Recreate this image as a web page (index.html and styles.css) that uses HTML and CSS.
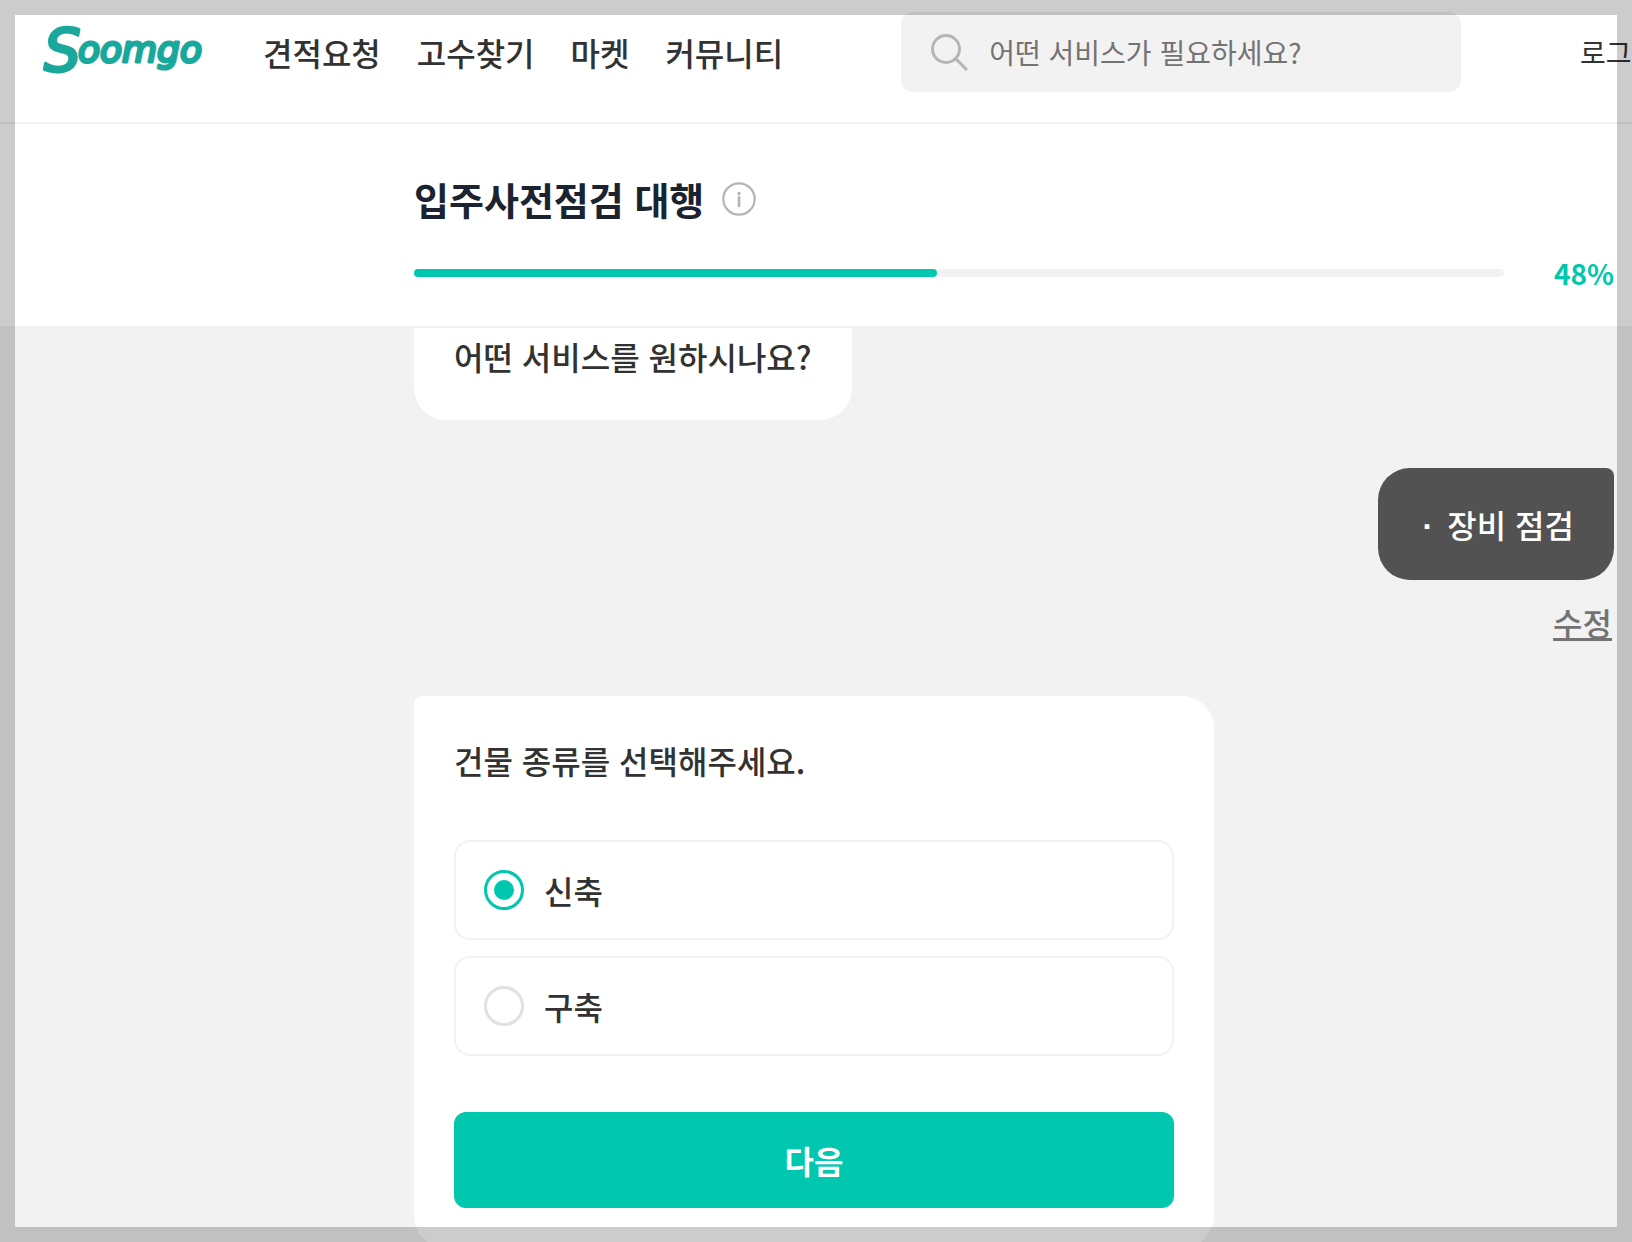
FILE: index.html
```html
<!DOCTYPE html>
<html lang="ko">
<head>
    <meta charset="UTF-8">
    <meta name="viewport" content="width=device-width, initial-scale=1.0">
    <title>입주사전점검 대행 - Soomgo</title>
    <link rel="stylesheet" href="styles.css">
</head>
<body>
    <!-- Top navigation -->
    <header class="header">
        <a href="#" class="logo">
            <svg width="164" height="64" viewBox="0 0 164 64">
                <text class="logo-initial" x="4" y="51">S</text>
                <text class="logo-rest" x="38" y="42">oomgo</text>
            </svg>
        </a>
        <nav class="nav">
            <a href="#">견적요청</a>
            <a href="#">고수찾기</a>
            <a href="#">마켓</a>
            <a href="#">커뮤니티</a>
        </nav>
        <label class="search">
            <svg class="search-icon" width="38" height="38" viewBox="0 0 38 38" fill="none" stroke="#b5b5b5" stroke-width="3">
                <circle cx="15" cy="16" r="13.5"/>
                <path d="M24.5 25.5L36 37"/>
            </svg>
            <input type="text" placeholder="어떤 서비스가 필요하세요?" aria-label="서비스 검색">
        </label>
        <a href="#" class="login">로그인</a>
    </header>

    <!-- Request title and progress -->
    <section class="progress-section">
        <div class="title-row">
            <h1>입주사전점검 대행</h1>
            <button class="info-btn" type="button" aria-label="서비스 안내">
                <svg width="34" height="34" viewBox="0 0 34 34" fill="none" stroke="#b5b5b5">
                    <circle cx="17" cy="17" r="15.7" stroke-width="2.2"/>
                    <path d="M17 15V24" stroke-width="2.6" stroke-linecap="round"/>
                    <circle cx="17" cy="11.5" r="1.7" fill="#b5b5b5" stroke="none"/>
                </svg>
            </button>
        </div>
        <div class="progress-row">
            <div class="progress-bar">
                <div class="progress-fill" style="width: 48%"></div>
            </div>
            <span class="progress-value">48%</span>
        </div>
    </section>

    <!-- Chat -->
    <main class="chat">
        <div class="question">어떤 서비스를 원하시나요?</div>

        <div class="answer"><span class="dot">·</span>장비 점검</div>
        <a href="#" class="edit">수정</a>

        <form class="card">
            <h2>건물 종류를 선택해주세요.</h2>
            <div class="options">
                <label class="option">
                    <input type="radio" name="building" checked>
                    <span>신축</span>
                </label>
                <label class="option">
                    <input type="radio" name="building">
                    <span>구축</span>
                </label>
            </div>
            <button class="next-btn" type="button">다음</button>
        </form>
    </main>

    <div class="frame"></div>
</body>
</html>
```
FILE: styles.css
```css
* {
    box-sizing: border-box;
}
body {
    margin: 0;
    height: 100vh;
    overflow: hidden;
    background-color: #f2f2f2;
    color: #323232;
    font-family: "Noto Sans CJK KR", "Noto Sans", sans-serif;
    font-size: 32px;
    font-weight: 500;
    line-height: 48px;
}
a {
    color: inherit;
    text-decoration: none;
}
.header {
    display: flex;
    align-items: center;
    padding: 12px 0 30px 40px;
    background-color: #fff;
    border-bottom: 2px solid #f2f2f2;
    white-space: nowrap;
}
.logo {
    flex: none;
    margin-right: 59px;
}
.logo svg {
    display: block;
    overflow: visible;
}
.logo text {
    fill: #1aa79c;
    stroke: #1aa79c;
    stroke-width: 3px;
    stroke-linejoin: round;
    font-family: "DejaVu Sans", sans-serif;
    font-style: italic;
    font-weight: 400;
}
.logo .logo-initial {
    font-size: 58px;
}
.logo .logo-rest {
    font-size: 36px;
}
.nav {
    display: flex;
    gap: 36px;
}
.search {
    display: flex;
    flex: 1;
    align-items: center;
    gap: 20px;
    height: 80px;
    margin-left: 118px;
    padding: 0 30px;
    background-color: #f2f2f2;
    border-radius: 12px;
}
.search-icon {
    flex: none;
}
.search input {
    flex: 1;
    min-width: 0;
    padding: 0;
    border: none;
    outline: none;
    background: none;
    font-family: inherit;
    font-size: 28px;
}
.search input::placeholder {
    color: #737373;
}
.login {
    width: 52px;
    margin-left: 119px;
    font-size: 28px;
    font-weight: 400;
}
.progress-section {
    padding: 46px 18px 29px 414px;
    background-color: #fff;
    border-bottom: 2px solid #f2f2f2;
}
.title-row {
    display: flex;
    align-items: center;
    gap: 18px;
    height: 58px;
}
h1 {
    margin: 0;
    color: #1b2230;
    font-size: 38px;
    font-weight: 700;
}
.info-btn {
    padding: 0;
    border: none;
    background: none;
    cursor: pointer;
}
.info-btn svg {
    display: block;
}
.progress-row {
    display: flex;
    align-items: center;
    gap: 50px;
    margin-top: 21px;
}
.progress-bar {
    flex: 1;
    height: 8px;
    background-color: #f2f2f2;
    border-radius: 4px;
}
.progress-fill {
    height: 100%;
    background-color: #00c7ae;
    border-radius: 4px;
}
.progress-value {
    color: #00c7ae;
    font-size: 28px;
    font-weight: 700;
}
.chat {
    display: flex;
    flex-direction: column;
    align-items: flex-start;
    padding: 0 18px 48px 414px;
}
.question {
    padding: 4px 40px 40px;
    background-color: #fff;
    border-radius: 0 0 32px 32px;
}
.answer {
    display: flex;
    align-self: flex-end;
    gap: 10px;
    margin-top: 48px;
    padding: 32px 40px;
    background-color: #525252;
    color: #fff;
    border-radius: 32px 8px 32px 32px;
}
.dot {
    width: 19px;
    font-family: "Liberation Sans", Arial, sans-serif;
    font-weight: 700;
    line-height: 52px;
    height: 48px;
    text-align: center;
}
.edit {
    align-self: flex-end;
    margin: 18px 2px 50px 0;
    color: #737373;
    text-decoration: underline;
}
.card {
    width: 100%;
    max-width: 800px;
    padding: 40px;
    background-color: #fff;
    border-radius: 8px 32px 32px 32px;
}
h2 {
    margin: 0 0 56px;
    font-size: 32px;
    font-weight: 500;
}
.options {
    display: flex;
    flex-direction: column;
    gap: 16px;
}
.option {
    display: flex;
    align-items: center;
    gap: 20px;
    height: 100px;
    padding: 0 28px;
    border: 2px solid #f2f2f2;
    border-radius: 16px;
    cursor: pointer;
}
.option input {
    appearance: none;
    width: 40px;
    height: 40px;
    margin: 0;
    border: 3px solid #e1e1e1;
    border-radius: 50%;
}
.option input:checked {
    padding: 7px;
    border-color: #00c7ae;
    background: #00c7ae content-box;
}
.next-btn {
    display: block;
    width: 100%;
    height: 96px;
    margin-top: 56px;
    border: none;
    border-radius: 12px;
    background-color: #00c7ae;
    color: #fff;
    font-family: inherit;
    font-size: 32px;
    font-weight: 700;
    cursor: pointer;
}
/* translucent edge around the whole window */
.frame {
    position: fixed;
    inset: 0;
    border: 15px solid rgba(0, 0, 0, 0.2);
    pointer-events: none;
}
```
